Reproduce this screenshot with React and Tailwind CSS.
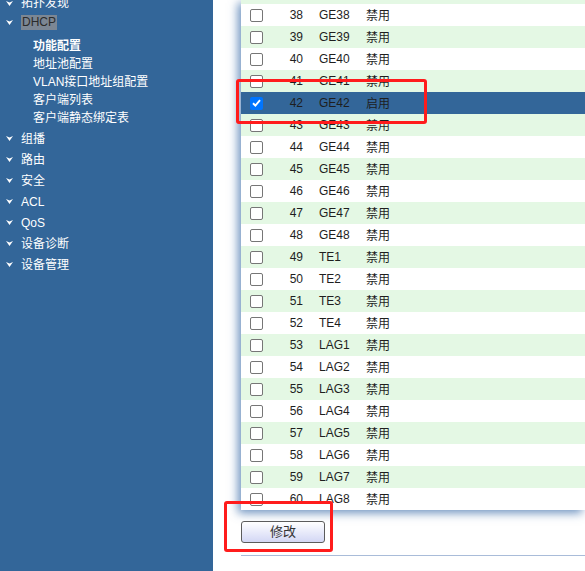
import React from 'react';

const Arrow = () => (
    <svg width="7" height="5" viewBox="0 0 7 5" className="shrink-0">
        <polygon points="0,0 3.5,1.6 7,0 3.5,5" fill="#ffffff" />
    </svg>
);

const SideItem = ({ label, className = '' }) => (
    <div className={`flex items-center pl-[6px] ${className}`}>
        <Arrow />
        <span className="ml-[8px] text-[12px] text-white">{label}</span>
    </div>
);

const subItems = ['功能配置', '地址池配置', 'VLAN接口地址组配置', '客户端列表', '客户端静态绑定表'];
const afterItems = ['组播', '路由', '安全', 'ACL', 'QoS', '设备诊断', '设备管理'];

const ports = [];
for (let i = 37; i <= 60; i++) {
    let name = '';
    if (i <= 48) name = `GE${i}`;
    else if (i <= 52) name = `TE${i - 48}`;
    else name = `LAG${i - 52}`;
    ports.push({ id: i, name, on: i === 42 });
}

const App = () => {
    return (
        <div
            className="relative flex w-[585px] h-[571px] overflow-hidden bg-white"
            style={{ fontFamily: '"Liberation Sans", Arial, "Noto Sans CJK SC", sans-serif' }}
        >
            {/* 左侧菜单 */}
            <div className="w-[213px] shrink-0 bg-[#336699] pt-0">
                <SideItem label="拓扑发现" className="h-[20px] -mt-[7px]" />
                <div className="flex items-center pl-[6px] h-[20px] mt-[-1px]">
                    <Arrow />
                    <span className="ml-[8px] px-[1px] text-[12px] leading-[15px] text-[#2b2b2b] bg-[#7c8794]">DHCP</span>
                </div>
                <div className="pl-[33px] pt-[5px] pb-[1px]">
                    {subItems.map((s, i) => (
                        <div key={s} className={`h-[18px] leading-[18px] text-[12px] text-white ${i === 0 ? 'font-bold' : ''}`}>
                            {s}
                        </div>
                    ))}
                </div>
                {afterItems.map((s) => (
                    <SideItem key={s} label={s} className="h-[21px]" />
                ))}
            </div>

            {/* 主内容 */}
            <div className="flex-1 pl-[28px]">
                <div className="h-[510px] bg-white shadow-[-3px_3px_9px_rgba(60,110,170,0.75)] overflow-hidden">
                    <div className="-mt-[18px]">
                        {ports.map((p, idx) => (
                            <div
                                key={p.id}
                                className={`flex items-center h-[22px] text-[12px] text-[#1e1e1e] ${
                                    p.on ? 'bg-[#336699]' : idx % 2 === 0 ? 'bg-[#e4f8e4]' : 'bg-white'
                                }`}
                            >
                                <div className="pl-[9px] w-[22px] flex">
                                    {p.on ? (
                                        <div className="w-[13px] h-[13px] rounded-[2px] bg-[#0075ff] flex items-center justify-center">
                                            <svg width="9" height="8" viewBox="0 0 9 8">
                                                <path d="M1 4.2 L3.4 6.5 L8 1.2" stroke="#fff" strokeWidth="1.9" fill="none" />
                                            </svg>
                                        </div>
                                    ) : (
                                        <div className="w-[13px] h-[13px] rounded-[2px] border border-[#767676] bg-white" />
                                    )}
                                </div>
                                <div className="w-[40px] text-right">{p.id}</div>
                                <div className="ml-[16px] w-[47px]">{p.name}</div>
                                <div style={{ fontFamily: '"Noto Sans CJK SC", sans-serif' }}>{p.on ? '启用' : '禁用'}</div>
                            </div>
                        ))}
                    </div>
                </div>
                <button className="mt-[11px] w-[84px] h-[22px] rounded-[3px] border border-[#5c5c5c] bg-gradient-to-b from-white to-[#d3d7f5] text-[13px] text-[#333] flex items-center justify-center">
                    修改
                </button>
                <div className="mt-[12px] h-px bg-[#a9bcd9]" />
            </div>

            {/* 标注框 */}
            <div className="absolute left-[236px] top-[79px] w-[191px] h-[45px] border-[3px] border-[#ff1c1c] rounded-[3px]" />
            <div className="absolute left-[224px] top-[501px] w-[109px] h-[51px] border-[3px] border-[#ff1c1c] rounded-[3px]" />
        </div>
    );
};

export default App;
